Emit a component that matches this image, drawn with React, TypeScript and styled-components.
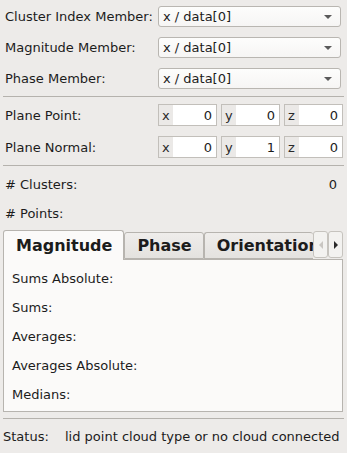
import styled, { createGlobalStyle } from "styled-components";

const GlobalStyle = createGlobalStyle`
  html, body {
    margin: 0;
    padding: 0;
    background: #edebe9;
  }
`;

const Page = styled.div`
  width: 347px;
  height: 453px;
  overflow: hidden;
  background: #edebe9;
  color: #1c1c1c;
  font-family: "DejaVu Sans", sans-serif;
  font-size: 13px;
  display: flex;
  flex-direction: column;
`;

const Form = styled.div`
  display: grid;
  grid-template-columns: 153px 1fr;
  row-gap: 10px;
  align-items: center;
  padding: 6px 6px 0 5px;
`;

const Label = styled.div`
  white-space: nowrap;
`;

const Combo = styled.div`
  height: 21px;
  box-sizing: border-box;
  border: 1px solid #b9b6b1;
  border-radius: 3px;
  background: linear-gradient(#fdfdfc, #f6f5f4);
  display: flex;
  align-items: center;
  justify-content: space-between;
  padding: 0 8px 0 4px;
`;

const Arrow = styled.span`
  width: 0;
  height: 0;
  border-left: 4px solid transparent;
  border-right: 4px solid transparent;
  border-top: 4px solid #5a5a5a;
`;

const Separator = styled.div<{ $top: number; $bottom: number }>`
  height: 1px;
  background: #b5b2ad;
  margin: ${(p) => `${p.$top}px 3px ${p.$bottom}px 3px`};
`;

const VectorRow = styled.div`
  display: flex;
  gap: 4px;
`;

const Spin = styled.div`
  width: 59px;
  height: 22px;
  box-sizing: border-box;
  border: 1px solid #c2bfba;
  display: flex;
  background: #ffffff;
`;

const Axis = styled.span`
  width: 14px;
  background: #ebe9e7;
  display: flex;
  align-items: center;
  padding-left: 3px;
  box-sizing: border-box;
  color: #2a2a2a;
`;

const SpinValue = styled.span`
  flex: 1;
  display: flex;
  align-items: center;
  justify-content: flex-end;
  padding-right: 4px;
`;

const InfoRow = styled.div`
  display: flex;
  justify-content: space-between;
  height: 29px;
  align-items: center;
  padding: 0 10px 0 5px;
`;

const TabWidget = styled.div`
  margin: 2px 4px 0 3px;
  display: flex;
  flex-direction: column;
`;

const TabBar = styled.div`
  display: flex;
  align-items: flex-end;
  height: 29px;
  position: relative;
  z-index: 1;
`;

const Tab = styled.div<{ $active?: boolean }>`
  height: ${(p) => (p.$active ? 30 : 27)}px;
  box-sizing: border-box;
  border: 1px solid #b7b4af;
  border-bottom: ${(p) => (p.$active ? "none" : "1px solid #b7b4af")};
  border-radius: 3px 3px 0 0;
  background: ${(p) => (p.$active ? "#fbfaf9" : "linear-gradient(#efedeb, #e4e2df)")};
  font-weight: bold;
  font-size: 16px;
  display: flex;
  align-items: center;
  padding: 0 11px 0 12px;
  white-space: nowrap;
  margin-bottom: ${(p) => (p.$active ? -1 : 0)}px;
  flex: none;
`;

const ClippedTab = styled(Tab)`
  flex: 1 1 auto;
  min-width: 0;
  overflow: hidden;
  padding-right: 0;
  border-right: none;
`;

const ScrollButton = styled.div`
  width: 15px;
  height: 27px;
  box-sizing: border-box;
  border: 1px solid #c6c3be;
  border-radius: 3px;
  background: #f3f2f0;
  display: flex;
  align-items: center;
  justify-content: center;
  flex: none;
  align-self: flex-start;
  margin-top: 1px;
  & > span {
    width: 0;
    height: 0;
    border-top: 4px solid transparent;
    border-bottom: 4px solid transparent;
  }
`;

const LeftTri = styled.span`
  border-right: 4px solid #c9c6c2;
`;

const RightTri = styled.span`
  border-left: 4px solid #2a2a2a;
`;

const Pane = styled.div`
  border: 1px solid #b7b4af;
  background: #fbfaf9;
  height: 153px;
  box-sizing: border-box;
  padding: 4px 8px 0 8px;
  display: flex;
  flex-direction: column;
`;

const PaneRow = styled.div`
  height: 29px;
  display: flex;
  align-items: center;
`;

const StatusBar = styled.div`
  display: flex;
  padding: 0 3px;
  height: 34px;
  align-items: center;
  white-space: nowrap;
  overflow: hidden;
`;

const StatusLabel = styled.span`
  width: 62px;
  flex: none;
`;

const combos = ["Cluster Index Member:", "Magnitude Member:", "Phase Member:"];
const vectors = [
  { label: "Plane Point:", values: ["0", "0", "0"] },
  { label: "Plane Normal:", values: ["0", "1", "0"] },
];
const stats = ["Sums Absolute:", "Sums:", "Averages:", "Averages Absolute:", "Medians:"];

export default function App() {
  return (
    <Page>
      <GlobalStyle />
      <Form>
        {combos.map((c) => (
          <>
            <Label key={c}>{c}</Label>
            <Combo>
              <span>x / data[0]</span>
              <Arrow />
            </Combo>
          </>
        ))}
      </Form>
      <Separator $top={7} $bottom={1} />
      <Form>
        {vectors.map((v) => (
          <>
            <Label key={v.label}>{v.label}</Label>
            <VectorRow>
              {["x", "y", "z"].map((a, i) => (
                <Spin key={a}>
                  <Axis>{a}</Axis>
                  <SpinValue>{v.values[i]}</SpinValue>
                </Spin>
              ))}
            </VectorRow>
          </>
        ))}
      </Form>
      <Separator $top={7} $bottom={4} />
      <InfoRow>
        <span># Clusters:</span>
        <span>0</span>
      </InfoRow>
      <InfoRow>
        <span># Points:</span>
        <span></span>
      </InfoRow>
      <TabWidget>
        <TabBar>
          <Tab $active>Magnitude</Tab>
          <Tab>Phase</Tab>
          <ClippedTab>Orientation</ClippedTab>
          <ScrollButton>
            <LeftTri />
          </ScrollButton>
          <ScrollButton>
            <RightTri />
          </ScrollButton>
        </TabBar>
        <Pane>
          {stats.map((s) => (
            <PaneRow key={s}>{s}</PaneRow>
          ))}
        </Pane>
      </TabWidget>
      <Separator $top={6} $bottom={0} />
      <StatusBar>
        <StatusLabel>Status:</StatusLabel>
        <span>lid point cloud type or no cloud connected</span>
      </StatusBar>
    </Page>
  );
}
